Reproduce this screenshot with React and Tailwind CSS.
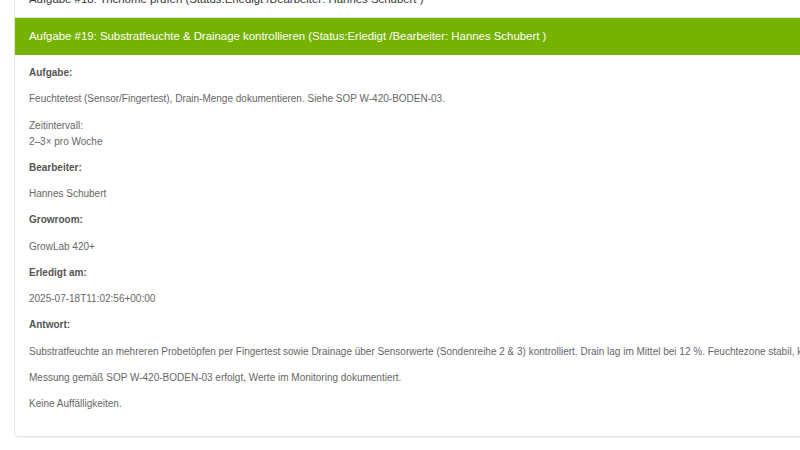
export default function App() {
  const font = { fontFamily: '"Liberation Sans", Arial, sans-serif' };
  const rows = [
    { label: 'Aufgabe:', values: [['Feuchtetest (Sensor/Fingertest), Drain-Menge dokumentieren. Siehe SOP W-420-BODEN-03.'], ['Zeitintervall:', '2–3× pro Woche']] },
    { label: 'Bearbeiter:', values: [['Hannes Schubert']] },
    { label: 'Growroom:', values: [['GrowLab 420+']] },
    { label: 'Erledigt am:', values: [['2025-07-18T11:02:56+00:00']] },
    {
      label: 'Antwort:',
      values: [
        ['Substratfeuchte an mehreren Probetöpfen per Fingertest sowie Drainage über Sensorwerte (Sondenreihe 2 & 3) kontrolliert. Drain lag im Mittel bei 12 %. Feuchtezone stabil, keine Staunässe erkennbar.'],
        ['Messung gemäß SOP W-420-BODEN-03 erfolgt, Werte im Monitoring dokumentiert.'],
        ['Keine Auffälligkeiten.'],
      ],
    },
  ];

  return (
    <div className="w-[800px] h-[450px] overflow-hidden bg-white" style={font}>
      <div className="w-[1100px] pl-[14px] -mt-[19px]">
        {/* previous task panel, mostly scrolled away */}
        <div className="border border-[#e3e3e3] border-b-0 rounded-t">
          <div className="h-[35px] px-[14px] flex items-center text-[11.4px] text-[#333] whitespace-nowrap">
            Aufgabe #18: Trichome prüfen (Status:Erledigt /Bearbeiter: Hannes Schubert )
          </div>
        </div>

        <div className="border border-[#e3e3e3] rounded-b shadow-[0_1px_1px_rgba(0,0,0,0.04)]">
          <div className="h-[37px] bg-[#76b300] px-[14px] flex items-center text-[11.4px] text-white whitespace-nowrap">
            Aufgabe #19: Substratfeuchte &amp; Drainage kontrollieren (Status:Erledigt /Bearbeiter: Hannes Schubert )
          </div>
          <div className="px-[14px] pt-[10px] pb-[14px] text-[10px] leading-[16px] text-[#666] whitespace-nowrap">
            {rows.map((r) => (
              <div key={r.label}>
                <p className="mb-[10.25px] font-bold text-[#555]">{r.label}</p>
                {r.values.map((lines, i) => (
                  <p key={i} className="mb-[10.25px]">
                    {lines.map((l, j) => (
                      <span key={j} className="block">{l}</span>
                    ))}
                  </p>
                ))}
              </div>
            ))}
          </div>
        </div>
      </div>
    </div>
  );
}
